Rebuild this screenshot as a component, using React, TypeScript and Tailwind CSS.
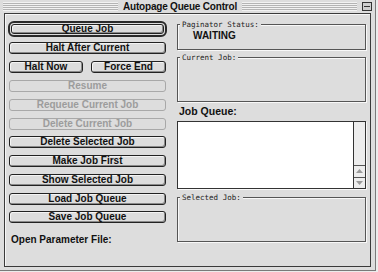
const sans = { fontFamily: '"Liberation Sans", Arial, sans-serif' };

function Btn({ label, disabled = false, className = "" }: { label: string; disabled?: boolean; className?: string }) {
  return (
    <div
      className={
        "h-[12px] flex items-center justify-center rounded-[3px] border text-[10px] font-bold leading-none " +
        (disabled
          ? "border-[#a8a8a8] text-[#9c9c9c]"
          : "border-[#222] text-[#111] shadow-[inset_-1px_-1px_0_#8a8a8a,inset_1px_1px_0_#f4f4f4]") +
        " " +
        className
      }
    >
      {label}
    </div>
  );
}

function Group({ label, className = "", children }: { label: string; className?: string; children?: React.ReactNode }) {
  return (
    <div className={"relative border border-[#555] shadow-[1px_1px_0_#f8f8f8,inset_1px_1px_0_#f8f8f8] " + className}>
      <span
        className="absolute -top-[5px] left-[2px] bg-[#dddddd] pl-[2px] pr-[2px] text-[7.5px] leading-[9px] text-[#222]"
        style={{ fontFamily: '"DejaVu Sans Mono", "Liberation Mono", monospace' }}
      >
        {label}
      </span>
      {children}
    </div>
  );
}

export default function App() {
  const stripes =
    "flex-1 h-[9px] bg-[repeating-linear-gradient(to_bottom,#f2f2f2_0px,#f2f2f2_1px,#b4b4b4_1px,#b4b4b4_2px)]";
  return (
    <div className="w-[378px] h-[272px] bg-[#ececec]" style={sans}>
      <div className="w-[376px] h-[271px] flex flex-col bg-[#dddddd] border-r border-b border-[#7a7a7a] px-[4px] pb-[3px]">
        {/* title bar */}
        <div className="h-[13px] flex items-center gap-[5px] -mx-[1px]">
          <div className={stripes} />
          <span className="text-[10px] font-bold leading-none text-[#111] tracking-[-0.2px]">Autopage Queue Control</span>
          <div className={stripes} />
          <div className="w-[10px] h-[9px] border border-[#333] bg-[#cfcfcf] flex flex-col justify-center px-[1px]">
            <div className="h-[1px] bg-[#333]" />
          </div>
        </div>

        {/* content panel */}
        <div className="flex-1 flex border border-[#3a3a3a] shadow-[inset_1px_1px_0_#f6f6f6] pl-[3px] pt-[7px]">
          {/* left column */}
          <div className="w-[159px] flex flex-col">
            <div className="h-[16px] border-2 border-[#2a2a2a] rounded-[6px] p-[1px]">
              <div className="h-full flex items-center justify-center rounded-[3px] border border-[#222] text-[10px] font-bold leading-none text-[#111] shadow-[inset_-1px_-1px_0_#8a8a8a,inset_1px_1px_0_#f4f4f4]">
                Queue Job
              </div>
            </div>
            <div className="ml-[1px] w-[157px] flex flex-col">
              <Btn label="Halt After Current" className="mt-[5px]" />
              <div className="flex justify-between mt-[7px]">
                <Btn label="Halt Now" className="w-[74px]" />
                <Btn label="Force End" className="w-[75px]" />
              </div>
              <Btn label="Resume" disabled className="mt-[7px]" />
              <Btn label="Requeue Current Job" disabled className="mt-[7px]" />
              <Btn label="Delete Current Job" disabled className="mt-[7px]" />
              <Btn label="Delete Selected Job" className="mt-[6px]" />
              <Btn label="Make Job First" className="mt-[7px]" />
              <Btn label="Show Selected Job" className="mt-[7px]" />
              <Btn label="Load Job Queue" className="mt-[7px]" />
              <Btn label="Save Job Queue" className="mt-[6px]" />
              <div className="mt-[12px] ml-[2px] text-[10px] font-bold leading-none text-[#111]">Open Parameter File:</div>
            </div>
          </div>

          {/* right column */}
          <div className="ml-[10px] w-[189px] flex flex-col pt-[3px]">
            <Group label="Paginator Status:" className="h-[26px]">
              <div className="pl-[15px] pt-[6px] text-[10px] font-bold leading-none text-[#111]">WAITING</div>
            </Group>
            <Group label="Current Job:" className="h-[45px] mt-[7px]" />
            <div className="mt-[4px] ml-[2px] text-[10.5px] font-bold leading-none text-[#111]">Job Queue:</div>
            <div className="mt-[4px] h-[68px] flex border border-[#333] bg-white shadow-[1px_1px_0_#f8f8f8]">
              <div className="flex-1" />
              <div className="w-[12px] flex flex-col border-l border-[#333] bg-[#ededed]">
                <div className="flex-1" />
                <div className="h-[12px] border-t border-[#555] flex items-center justify-center">
                  <svg width="7" height="4" viewBox="0 0 7 4">
                    <path d="M0 4 L3.5 0 L7 4 Z" fill="#9a9a9a" />
                  </svg>
                </div>
                <div className="h-[11px] border-t border-[#555] flex items-center justify-center">
                  <svg width="7" height="4" viewBox="0 0 7 4">
                    <path d="M0 0 L3.5 4 L7 0 Z" fill="#9a9a9a" />
                  </svg>
                </div>
              </div>
            </div>
            <Group label="Selected Job:" className="h-[45px] mt-[8px]" />
          </div>
        </div>
      </div>
    </div>
  );
}
